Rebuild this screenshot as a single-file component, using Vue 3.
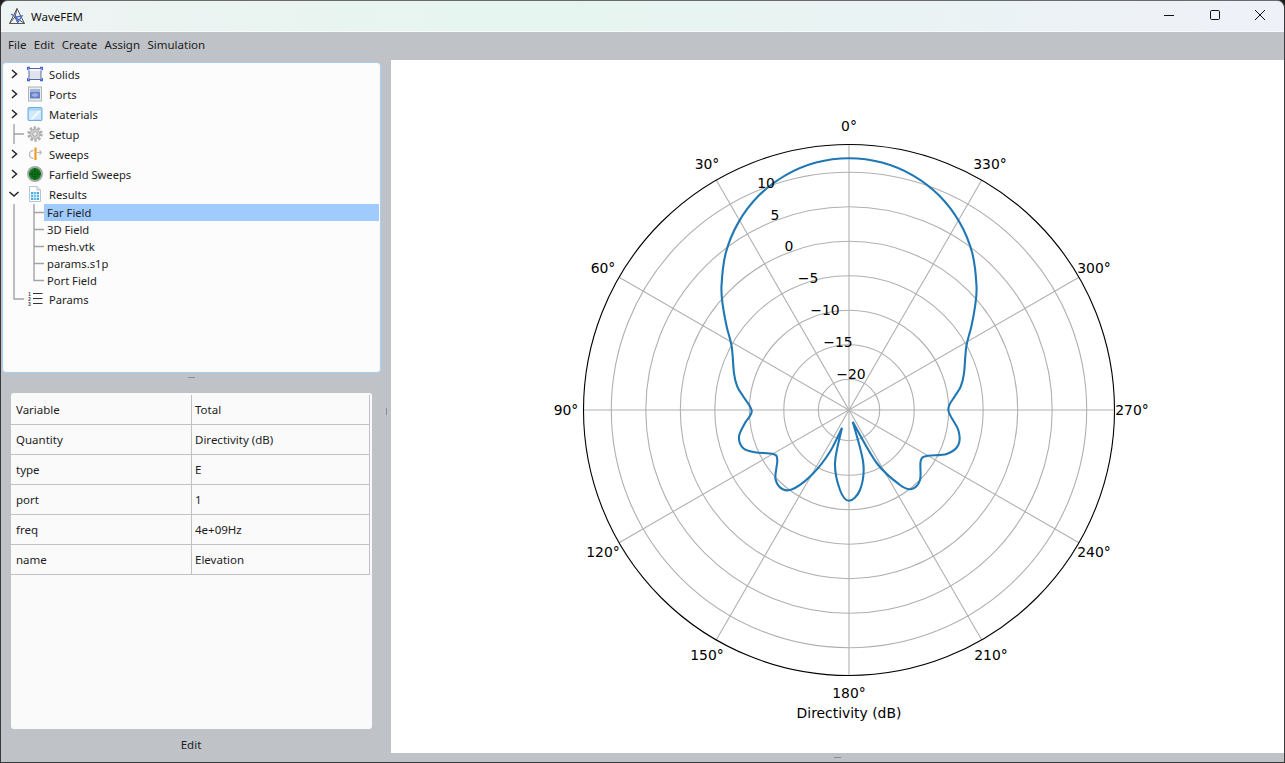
<script setup>
const menus = ['File', 'Edit', 'Create', 'Assign', 'Simulation'];

const tree = [
  { label: 'Solids', icon: 'solids', kind: 'closed' },
  { label: 'Ports', icon: 'ports', kind: 'closed' },
  { label: 'Materials', icon: 'materials', kind: 'closed' },
  { label: 'Setup', icon: 'setup', kind: 'leaf' },
  { label: 'Sweeps', icon: 'sweeps', kind: 'closed' },
  { label: 'Farfield Sweeps', icon: 'farfield', kind: 'closed' },
  { label: 'Results', icon: 'results', kind: 'open' },
  { label: 'Far Field', kind: 'child', selected: true },
  { label: '3D Field', kind: 'child' },
  { label: 'mesh.vtk', kind: 'child' },
  { label: 'params.s1p', kind: 'child' },
  { label: 'Port Field', kind: 'child', last: true },
  { label: 'Params', icon: 'params', kind: 'last' }
];

const props = [
  ['Variable', 'Total'],
  ['Quantity', 'Directivity (dB)'],
  ['type', 'E'],
  ['port', '1'],
  ['freq', '4e+09Hz'],
  ['name', 'Elevation']
];

// plot uses page coordinates, see viewBox on the svg
const cx = 849;
const cy = 410;
const outer = 265.5;

const rings = [30.7, 65.2, 99.7, 134.2, 168.7, 203.2, 237.7];

const spokes = [0, 30, 60, 90, 120, 150].map((deg) => {
  const a = (deg * Math.PI) / 180;
  return {
    x1: cx + outer * Math.sin(a),
    y1: cy - outer * Math.cos(a),
    x2: cx - outer * Math.sin(a),
    y2: cy + outer * Math.cos(a)
  };
});

const angleLabels = [
  ['0°', 849, 126],
  ['30°', 707, 164],
  ['330°', 990, 164],
  ['60°', 603, 268],
  ['300°', 1094, 268],
  ['90°', 566, 410],
  ['270°', 1132, 410],
  ['120°', 603, 552],
  ['240°', 1094, 552],
  ['150°', 707, 655],
  ['210°', 991, 655],
  ['180°', 849, 693]
];

const radialLabels = [
  ['10', 766, 183],
  ['5', 775, 215],
  ['0', 789, 246],
  ['−5', 808, 278],
  ['−10', 825, 310],
  ['−15', 838, 342],
  ['−20', 851, 374]
];

// the top of the main lobe is practically a circle
const crown = [];
for (let deg = 165; deg >= 15; deg -= 15) {
  const a = (deg * Math.PI) / 180;
  crown.push([849 + 127.5 * Math.cos(a), 285.8 - 127.5 * Math.sin(a)]);
}

const flankLeft = [[737.3, 386.7], [734, 373.3], [731.7, 346.7], [726.7, 326.7], [723, 306.7], [721.5, 285.8]];
const flankRight = flankLeft.map(([x, y]) => [1698 - x, y]).reverse();

const outerLobe = [
  [842, 427.7], [830, 451.7], [813.3, 473.3], [795, 488], [783.3, 489.5], [775.5, 479], [777.3, 460],
  [773.3, 454], [755, 452.3], [743.3, 448.3], [739, 436.7], [745, 423], [751.7, 411], [743, 396],
  ...flankLeft, ...crown, ...flankRight,
  [955, 396], [948.3, 410], [958.3, 430],
  [958.3, 445], [946.7, 454], [926.7, 456], [920.7, 461], [920, 480], [911.7, 489], [900, 485],
  [876.7, 463], [852.7, 421.7]
];

const midLobe = [
  [842, 427.7], [835, 463], [840, 490], [849, 500.7], [860, 490], [863.3, 463.3], [852.7, 421.7]
];

// catmull-rom through the measured points
function smooth(pts) {
  let d = `M${pts[0][0]} ${pts[0][1]}`;
  for (let i = 0; i < pts.length - 1; i++) {
    const p0 = pts[i - 1] || pts[i];
    const p1 = pts[i];
    const p2 = pts[i + 1];
    const p3 = pts[i + 2] || p2;
    const c1x = p1[0] + (p2[0] - p0[0]) / 6;
    const c1y = p1[1] + (p2[1] - p0[1]) / 6;
    const c2x = p2[0] - (p3[0] - p1[0]) / 6;
    const c2y = p2[1] - (p3[1] - p1[1]) / 6;
    d += `C${c1x.toFixed(1)} ${c1y.toFixed(1)} ${c2x.toFixed(1)} ${c2y.toFixed(1)} ${p2[0].toFixed(1)} ${p2[1].toFixed(1)}`;
  }
  return d;
}

const curve = smooth(outerLobe) + smooth(midLobe);
</script>

<template>
  <div class="window">
    <header class="titlebar">
      <svg class="logo" width="18" height="18" viewBox="0 0 18 18">
        <path d="M9 1.5L1.5 16.5h15zM9 1.5l-2 8.5 9.5 6.5M7 10l-5.5 6.5M7 10l3 6.5" fill="none" stroke="#555" stroke-width="1" />
        <path d="M3 7l5 3 2 5 4-6-6 1" fill="none" stroke="#4a6fd0" stroke-width="1.3" />
      </svg>
      <span class="app-name">WaveFEM</span>
      <div class="controls">
        <button class="ctl">
          <svg width="12" height="12" viewBox="0 0 12 12"><path d="M1 6.5h10" stroke="#111" /></svg>
        </button>
        <button class="ctl">
          <svg width="12" height="12" viewBox="0 0 12 12"><rect x="1.5" y="1.5" width="9" height="9" rx="1.2" fill="none" stroke="#111" /></svg>
        </button>
        <button class="ctl">
          <svg width="12" height="12" viewBox="0 0 12 12"><path d="M1 1l10 10M11 1L1 11" stroke="#111" /></svg>
        </button>
      </div>
    </header>

    <nav class="menubar">
      <span v-for="m in menus" :key="m" class="menu">{{ m }}</span>
    </nav>

    <main class="body">
      <section class="left">
        <div class="tree">
          <div
            v-for="row in tree"
            :key="row.label"
            class="row"
            :class="{ sub: row.kind === 'child' }"
          >
            <svg v-if="row.kind === 'child'" class="gutter" width="41" height="17">
              <path d="M11 0V17" class="guide" />
              <path :d="row.last ? 'M31 0V8.5H41' : 'M31 0V17M31 8.5H41'" class="guide" />
            </svg>
            <svg v-else class="gutter" width="24" height="20">
              <path v-if="row.kind === 'closed'" d="M9 6l4.5 4L9 14" class="chev" />
              <path v-if="row.kind === 'open'" d="M6.5 8l4.5 4 4.5-4" class="chev" />
              <path v-if="row.kind === 'leaf'" d="M11 0V20M11 10H21" class="guide" />
              <path v-if="row.kind === 'last'" d="M11 0V10H21" class="guide" />
            </svg>

            <svg v-if="row.icon" class="icon" width="16" height="16" viewBox="0 0 16 16">
              <g v-if="row.icon === 'solids'">
                <rect x="2" y="2.5" width="12" height="11" fill="#dfe3ee" stroke="#5a68a0" />
                <rect x="2.5" y="3" width="11" height="2" fill="#f6f7fa" />
                <path d="M0.5 4V1.5H3M13 1.5h2.5V4M15.5 12v2.5H13M3 14.5H0.5V12" fill="none" stroke="#3a6ae0" stroke-width="1.3" />
              </g>
              <g v-if="row.icon === 'ports'">
                <rect x="1.5" y="1" width="13" height="14" fill="#e8eeee" stroke="#aab6b6" />
                <rect x="3" y="3" width="10" height="10" fill="#a5b4d8" />
                <rect x="3" y="6" width="10" height="6" fill="#6a82cc" />
                <ellipse cx="8" cy="9" rx="3" ry="1.7" fill="#a3b1e2" />
              </g>
              <g v-if="row.icon === 'materials'">
                <rect x="1" y="1.5" width="14" height="13" rx="1" fill="#a6d4f4" stroke="#6caede" />
                <rect x="2" y="4.5" width="12" height="9" fill="#cfe8fa" />
                <path d="M3 13.5L11 5h3L6 13.5z" fill="#f4fafe" />
              </g>
              <g v-if="row.icon === 'setup'">
                <circle cx="8" cy="8" r="6.4" fill="none" stroke="#b0b0b0" stroke-width="2.6" stroke-dasharray="2.4 1.6" />
                <circle cx="8" cy="8" r="5" fill="#cfcfcf" stroke="#9a9a9a" stroke-width="0.7" />
                <circle cx="8" cy="8" r="2.2" fill="#eeeeee" stroke="#8f8f8f" stroke-width="0.7" />
              </g>
              <g v-if="row.icon === 'sweeps'">
                <path d="M6.5 4.5A4 4 0 0 0 6.5 12.5" fill="none" stroke="#bdbdbd" stroke-width="1.5" />
                <path d="M8.5 1.5V14" stroke="#ee9a26" stroke-width="2.2" />
                <path d="M10 6.5h4M12.5 4.5l2 2-2 2" fill="none" stroke="#bdbdbd" stroke-width="1.2" />
              </g>
              <g v-if="row.icon === 'farfield'">
                <circle cx="8" cy="8" r="8" fill="#a3a9a3" />
                <circle cx="8" cy="8" r="6" fill="#0f7a1e" />
                <path d="M2 8h12M8 2v12" stroke="#0a4f12" stroke-width="0.8" />
                <circle cx="8" cy="8" r="3.2" fill="none" stroke="#0a4f12" stroke-width="0.7" />
              </g>
              <g v-if="row.icon === 'results'">
                <path d="M2.5 0.5h7.5l3.5 3.5v11.5h-11z" fill="#fff" stroke="#b7c4cf" />
                <path d="M10 0.5V4h3.5" fill="#e4edf2" stroke="#b7c4cf" />
                <rect x="4" y="6" width="8" height="8" fill="#45aee8" />
                <path d="M6.7 6v8M9.3 6v8M4 8.7h8M4 11.3h8" stroke="#fff" stroke-width="0.8" />
              </g>
              <g v-if="row.icon === 'params'">
                <path d="M6 2.5h9.5M6 7.5h9.5M6 12.5h9.5" stroke="#333" stroke-width="1.1" />
                <text x="2.5" y="4.6" class="tiny">1</text>
                <text x="2.5" y="9.9" class="tiny">2</text>
                <text x="2.5" y="15.2" class="tiny">3</text>
              </g>
            </svg>

            <span class="label" :class="{ selected: row.selected }">{{ row.label }}</span>
          </div>
        </div>

        <div class="grip-row"><span class="grip"></span></div>

        <div class="props">
          <table>
            <tbody>
              <tr v-for="p in props" :key="p[0]">
                <td class="key">{{ p[0] }}</td>
                <td class="val">{{ p[1] }}</td>
              </tr>
            </tbody>
          </table>
        </div>

        <button class="edit">Edit</button>
      </section>

      <div class="split-v"><span class="grip-v"></span></div>

      <section class="right">
        <div class="plot">
          <svg width="892" height="693" viewBox="391 60 892 693">
            <circle v-for="r in rings" :key="r" :cx="cx" :cy="cy" :r="r" class="grid" />
            <line
              v-for="(s, i) in spokes"
              :key="i"
              :x1="s.x1"
              :y1="s.y1"
              :x2="s.x2"
              :y2="s.y2"
              class="grid"
            />
            <path :d="curve" class="curve" />
            <circle :cx="cx" :cy="cy" :r="outer" class="rim" />
            <text v-for="l in angleLabels" :key="l[0]" :x="l[1]" :y="l[2]" class="tick">{{ l[0] }}</text>
            <text v-for="l in radialLabels" :key="l[0]" :x="l[1]" :y="l[2]" class="tick">{{ l[0] }}</text>
            <text x="849" y="713" class="tick">Directivity (dB)</text>
          </svg>
        </div>
        <div class="grip-bottom"><span class="grip"></span></div>
      </section>
    </main>
  </div>
</template>

<style>
html,
body {
  margin: 0;
  background: #1e1e1e;
}
</style>

<style scoped>
.window {
  width: 1285px;
  height: 763px;
  box-sizing: border-box;
  border: 1px solid #3a3a3a;
  border-top-color: #6a6a6a;
  border-radius: 8px 8px 0 0;
  overflow: hidden;
  display: flex;
  flex-direction: column;
  background: #bfc2c7;
  font-family: "Noto Sans", "Liberation Sans", sans-serif;
  font-size: 11.5px;
  color: #1d1d24;
}

.titlebar {
  height: 30px;
  flex: none;
  display: flex;
  align-items: center;
  padding-left: 7px;
  border-bottom: 1px solid #f7f8f9;
  background: linear-gradient(90deg, #eef3f3 0%, #e6f5ef 40%, #e9f3f3 65%, #eff1f8 100%);
}

.logo {
  flex: none;
}

.app-name {
  margin-left: 5px;
  font-size: 11.5px;
  color: #111;
}

.controls {
  margin-left: auto;
  display: flex;
  margin-right: 1px;
}

.ctl {
  width: 45.5px;
  height: 30px;
  border: none;
  padding: 0 0 3px;
  background: none;
  display: flex;
  align-items: center;
  justify-content: center;
}

.menubar {
  height: 28px;
  flex: none;
  display: flex;
  align-items: center;
  gap: 7.4px;
  padding: 0 0 3px 7px;
  box-sizing: border-box;
}

.body {
  flex: 1;
  min-height: 0;
  display: flex;
}

.left {
  width: 380px;
  flex: none;
  display: flex;
  flex-direction: column;
}

.tree {
  height: 311px;
  flex: none;
  margin: 2px 0 0 1px;
  padding-top: 1px;
  box-sizing: border-box;
  border: 1px solid #a9cfec;
  border-radius: 4px;
  background: #fcfcfc;
  font-size: 11.2px;
}

.row {
  height: 20px;
  display: flex;
  align-items: center;
}

.row.sub {
  height: 17px;
}

.gutter {
  flex: none;
}

.guide {
  fill: none;
  stroke: #a3a3a3;
  stroke-width: 1.4;
}

.chev {
  fill: none;
  stroke: #23232b;
  stroke-width: 1.5;
}

.icon {
  flex: none;
}

.tiny {
  font-family: "Liberation Sans", sans-serif;
  font-size: 4.5px;
  font-weight: bold;
  text-anchor: middle;
  fill: #333;
}

.label {
  margin-left: 6px;
}

.row.sub .label {
  margin: 0 1px 0 0;
  padding-left: 3px;
  flex: 1;
  height: 17px;
  line-height: 17px;
}

.row.sub .label.selected {
  background: #9fcbff;
}

.grip-row {
  height: 20px;
  flex: none;
  display: flex;
  justify-content: center;
  padding-top: 4px;
  box-sizing: border-box;
}

.grip {
  display: block;
  width: 7px;
  height: 1px;
  background: #8a8d92;
}

.props {
  height: 336px;
  flex: none;
  margin: 0 9px 0 10px;
  border-radius: 3px;
  background: #fafafa;
}

table {
  width: 359px;
  border-collapse: collapse;
  table-layout: fixed;
  margin-top: 2px;
}

td {
  height: 29px;
  border-right: 1px solid #c0c2c8;
  border-bottom: 1px solid #c0c2c8;
}

.key {
  width: 175px;
  padding: 0 0 0 5px;
}

.val {
  padding: 0 0 0 3px;
}

.edit {
  flex: 1;
  border: none;
  background: none;
  font: inherit;
  color: inherit;
  padding: 0 0 2px;
}

.split-v {
  width: 10px;
  flex: none;
  display: flex;
  align-items: center;
  justify-content: center;
}

.grip-v {
  display: block;
  width: 1px;
  height: 7px;
  background: #8a8d92;
}

.right {
  flex: 1;
  min-width: 0;
  display: flex;
  flex-direction: column;
}

.plot {
  flex: 1;
  min-height: 0;
  background: #fff;
}

.plot svg {
  display: block;
}

.grip-bottom {
  height: 9px;
  flex: none;
  display: flex;
  align-items: center;
  justify-content: center;
}

.grid {
  fill: none;
  stroke: #b0b0b0;
  stroke-width: 1.1;
}

.rim {
  fill: none;
  stroke: #000;
  stroke-width: 1.1;
}

.curve {
  fill: none;
  stroke: #1f77b4;
  stroke-width: 2.1;
  stroke-linejoin: round;
}

.tick {
  font-family: "DejaVu Sans", sans-serif;
  font-size: 13.9px;
  text-anchor: middle;
  dominant-baseline: central;
  fill: #000;
}
</style>
